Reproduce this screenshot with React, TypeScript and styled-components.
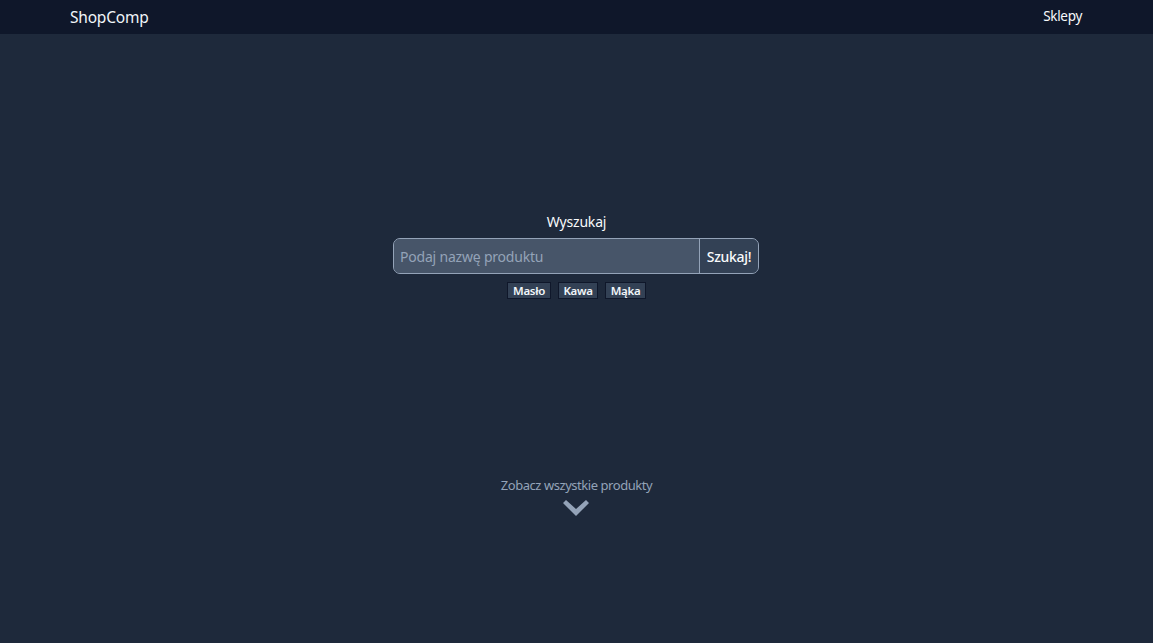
import React from "react";
import styled, { createGlobalStyle } from "styled-components";

const Global = createGlobalStyle`
  html, body { margin: 0; padding: 0; background: #1e293b; }
  body { font-family: "Noto Sans", "Open Sans", sans-serif; }
  * { box-sizing: border-box; }
`;

const Page = styled.div`
  min-height: 643px;
  display: flex;
  flex-direction: column;
  background: #1e293b;
`;

const Header = styled.header`
  height: 34px;
  background: #0f172a;
  display: flex;
  align-items: center;
  justify-content: space-between;
  padding: 0 71px 0 70px;
`;

const Logo = styled.div`
  color: #f1f5f9;
  font-size: 15.5px;
  letter-spacing: -0.2px;
  margin-top: -1px;
`;

const NavLink = styled.a`
  color: #f8fafc;
  font-size: 13.5px;
  letter-spacing: -0.3px;
  margin-top: -3px;
`;

const SearchSection = styled.section`
  display: flex;
  flex-direction: column;
  align-items: center;
  padding-top: 178px;
`;

const Title = styled.div`
  color: #f8fafc;
  font-size: 14px;
  letter-spacing: -0.2px;
  line-height: 20px;
`;

const SearchBar = styled.div`
  margin-top: 6px;
  margin-right: 1px;
  width: 366px;
  height: 36px;
  display: flex;
  border: 1px solid #94a3b8;
  border-radius: 7px;
  overflow: hidden;
  background: #475569;
`;

const Input = styled.input`
  flex: 1;
  min-width: 0;
  border: none;
  outline: none;
  background: #475569;
  color: #f8fafc;
  font-family: inherit;
  font-size: 14px;
  padding: 0 6px;
  letter-spacing: -0.2px;
  caret-color: #f8fafc;
  &::placeholder { color: #94a3b8; }
`;

const SearchButton = styled.button`
  width: 59px;
  border: none;
  border-left: 1px solid #94a3b8;
  background: #334155;
  color: #f8fafc;
  font-family: inherit;
  font-size: 14px;
  font-weight: 500;
  letter-spacing: -0.3px;
  padding: 0;
  cursor: pointer;
`;

const Tags = styled.div`
  display: flex;
  gap: 7px;
  margin-top: 8px;
`;

const Tag = styled.button<{ $w: number }>`
  width: ${(p) => p.$w}px;
  height: 17px;
  padding: 0;
  background: #334155;
  border: 1px solid #0f172a;
  color: #f1f5f9;
  font-family: inherit;
  font-size: 11.5px;
  font-weight: 600;
  letter-spacing: -0.3px;
  line-height: 14px;
  cursor: pointer;
`;

const Spacer = styled.div`
  height: 177px;
`;

const AllProducts = styled.div`
  display: flex;
  flex-direction: column;
  align-items: center;
  color: #94a3b8;
  font-size: 13px;
  letter-spacing: -0.45px;
`;

const Chevron = styled.svg`
  margin-top: 6px;
  width: 28px;
  height: 18px;
`;

export default function App() {
  return (
    <>
      <Global />
      <Page>
        <Header>
          <Logo>ShopComp</Logo>
          <NavLink>Sklepy</NavLink>
        </Header>
        <SearchSection>
          <Title>Wyszukaj</Title>
          <SearchBar>
            <Input placeholder="Podaj nazwę produktu" autoFocus />
            <SearchButton>Szukaj!</SearchButton>
          </SearchBar>
          <Tags>
            <Tag $w={44}>Masło</Tag>
            <Tag $w={40}>Kawa</Tag>
            <Tag $w={41}>Mąka</Tag>
          </Tags>
          <Spacer />
          <AllProducts>
            Zobacz wszystkie produkty
            <Chevron viewBox="0 0 28 18">
              <path d="M1 3 L4 0 L14 9 L24 0 L27 3 L14 16 Z" fill="#94a3b8" />
            </Chevron>
          </AllProducts>
        </SearchSection>
      </Page>
    </>
  );
}
